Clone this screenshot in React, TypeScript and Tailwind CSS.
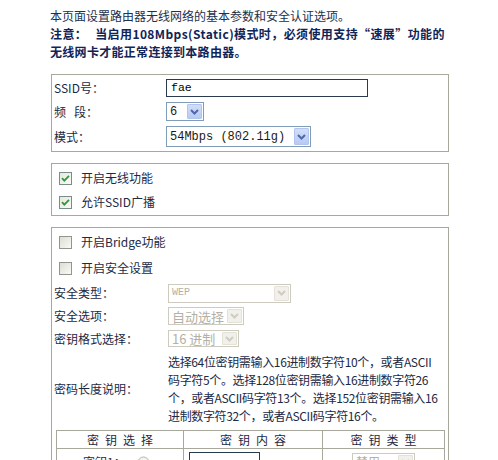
const cjk = "font-['Noto_Sans_CJK_SC',sans-serif]";
const mono = "font-['Liberation_Mono','Noto_Sans_CJK_SC',monospace]";

function Chevron({ disabled }: { disabled?: boolean }) {
  return (
    <svg width="9" height="6" viewBox="0 0 9 6">
      <path
        d="M1 1 L4.5 4.5 L8 1"
        fill="none"
        stroke={disabled ? "#cfcdc2" : "#4d6aa8"}
        strokeWidth="2"
      />
    </svg>
  );
}

function Select({
  className,
  value,
  disabled,
  textClass,
}: {
  className: string;
  value: string;
  disabled?: boolean;
  textClass: string;
}) {
  return (
    <div
      className={`flex items-stretch bg-white border ${
        disabled ? "border-[#cdcbc0]" : "border-[#7f9db9]"
      } ${className}`}
    >
      <span
        className={`flex-1 flex items-center pl-[3px] whitespace-nowrap leading-none ${textClass} ${
          disabled ? "text-[#b4b1a4]" : "text-[#1a1a1a]"
        }`}
      >
        {value}
      </span>
      <span
        className={`w-[15px] my-[1px] mr-[1px] flex items-center justify-center rounded-[1px] border ${
          disabled
            ? "bg-[#f1f0ea] border-[#e4e2d8]"
            : "bg-gradient-to-b from-[#d2ddf8] to-[#b8caf3] border-[#b3c4ee]"
        }`}
      >
        <Chevron disabled={disabled} />
      </span>
    </div>
  );
}

function Checkbox({ checked }: { checked?: boolean }) {
  return (
    <svg width="13" height="13" viewBox="0 0 13 13" className="shrink-0">
      <defs>
        <linearGradient id={checked ? "cbOn" : "cbOff"} x1="0" y1="0" x2="1" y2="1">
          <stop offset="0" stopColor={checked ? "#e2e8df" : "#dcdcd2"} />
          <stop offset="1" stopColor="#fbfbf8" />
        </linearGradient>
      </defs>
      <rect
        x="0.5"
        y="0.5"
        width="12"
        height="12"
        fill={`url(#${checked ? "cbOn" : "cbOff"})`}
        stroke={checked ? "#7a8c86" : "#8f9690"}
      />
      {checked && (
        <path d="M3 6.2 L5.3 8.6 L10 3.8" fill="none" stroke="#2f9a35" strokeWidth="1.8" />
      )}
    </svg>
  );
}

function Radio() {
  return (
    <svg width="13" height="13" viewBox="0 0 13 13">
      <circle cx="6.5" cy="6.5" r="5.5" fill="#f4f4f0" stroke="#b5b4ac" />
    </svg>
  );
}

function CheckRow({ label, checked }: { label: string; checked?: boolean }) {
  return (
    <div className="h-[24px] flex items-center pl-[7px] gap-[9px]">
      <Checkbox checked={checked} />
      <span className="text-[12px] text-[#1c2a44] leading-none">{label}</span>
    </div>
  );
}

const keyHead = ["密钥选择", "密钥内容", "密钥类型"];

export default function App() {
  return (
    <div className={`min-h-screen w-[498px] bg-white pb-10 ${cjk}`}>
      <div className="pl-[50px] pt-[7px] text-[12px] leading-[18px] whitespace-nowrap">
        <p className="text-[#22304c]">本页面设置路由器无线网络的基本参数和安全认证选项。</p>
        <p className="font-bold text-[#102458] tracking-[0.4px]">
          注意：<span className="inline-block w-[8px]" />当启用108Mbps(Static)模式时，必须使用支持“速展”功能的
        </p>
        <p className="font-bold text-[#102458] tracking-[0.3px]">无线网卡才能正常连接到本路由器。</p>
      </div>

      <div className="ml-[51px] w-[398px] mt-[13px] border border-[#a9a89d] pt-[4px] pb-[4px] flex flex-col gap-[5px] text-[12px] text-[#1c2a44]">
        <div className="flex items-center h-[18px]">
          <span className="w-[114px] pl-[2px] leading-none">SSID号：</span>
          <div className={`w-[202px] h-[18px] border border-[#2a3b4f] flex items-center pl-[4px] text-[11.5px] leading-none text-black ${mono}`}>
            fae
          </div>
        </div>
        <div className="flex items-center h-[19px]">
          <span className="w-[114px] pl-[2px] leading-none">
            频<span className="inline-block w-[8px]" />段：
          </span>
          <Select className="w-[38px] h-[19px]" value="6" textClass={`text-[12px] ${mono}`} />
        </div>
        <div className="flex items-center h-[21px]">
          <span className="w-[114px] pl-[2px] leading-none">模式：</span>
          <Select className="w-[145px] h-[21px]" value="54Mbps (802.11g)" textClass={`text-[12px] ${mono}`} />
        </div>
      </div>

      <div className="ml-[51px] w-[398px] mt-[11px] border border-[#a9a89d] pt-[2px] pb-[1px]">
        <CheckRow label="开启无线功能" checked />
        <CheckRow label="允许SSID广播" checked />
      </div>

      <div className="ml-[51px] w-[398px] mt-[11px] border border-[#a9a89d] pt-[1px] pb-[6px] text-[12px] text-[#1c2a44]">
        <div className="h-[26px] flex items-center pl-[7px] gap-[9px]">
          <Checkbox />
          <span className="leading-none">开启Bridge功能</span>
        </div>
        <div className="h-[26px] flex items-center pl-[7px] gap-[9px]">
          <Checkbox />
          <span className="leading-none">开启安全设置</span>
        </div>
        <div className="h-[24px] flex items-center">
          <span className="w-[116px] pl-[2px] leading-none">安全类型：</span>
          <Select className="w-[123px] h-[19px]" value="WEP" disabled textClass={`text-[10px] ${mono}`} />
        </div>
        <div className="h-[22px] flex items-center">
          <span className="w-[116px] pl-[2px] leading-none">安全选项：</span>
          <Select className="w-[76px] h-[18px]" value="自动选择" disabled textClass="text-[13px]" />
        </div>
        <div className="h-[23px] flex items-center">
          <span className="w-[116px] pl-[2px] leading-none">密钥格式选择：</span>
          <Select className="w-[71px] h-[17px]" value="16 进制" disabled textClass="text-[13px]" />
        </div>
        <div className="flex items-center pt-[3px]">
          <span className="w-[116px] pl-[2px] leading-none">密码长度说明：</span>
          <div className="leading-[18px] whitespace-nowrap text-[12px] tracking-[-0.35px]">
            <p>选择64位密钥需输入16进制数字符10个，或者ASCII</p>
            <p>码字符5个。选择128位密钥需输入16进制数字符26</p>
            <p>个，或者ASCII码字符13个。选择152位密钥需输入16</p>
            <p>进制数字符32个，或者ASCII码字符16个。</p>
          </div>
        </div>

        <div className="ml-[4px] mt-[5px] w-[389px] border border-[#a9a89d]">
          <div className="grid grid-cols-[127px_139px_1fr] h-[18px] border-b border-[#a9a89d]">
            {keyHead.map((h, i) => (
              <div
                key={h}
                className={`flex items-center justify-center gap-[6px] leading-none ${
                  i < 2 ? "border-r border-[#a9a89d]" : ""
                }`}
              >
                {h.split("").map((c, j) => (
                  <span key={j}>{c}</span>
                ))}
              </div>
            ))}
          </div>
          {[1, 2, 3, 4].map((n) => (
            <div key={n} className="grid grid-cols-[127px_139px_1fr] h-[27px] border-b border-[#a9a89d] last:border-b-0">
              <div className="flex items-center pl-[26px] gap-[8px] border-r border-[#a9a89d]">
                <span className="w-[46px] leading-none">密钥{n}：</span>
                <Radio />
              </div>
              <div className="flex items-center pl-[5px] border-r border-[#a9a89d]">
                <div className="w-[71px] h-[20px] border border-[#2a3b4f]" />
              </div>
              <div className="flex items-center pl-[29px]">
                <Select className="w-[63px] h-[19px]" value="禁用" disabled textClass="text-[12px]" />
              </div>
            </div>
          ))}
        </div>
      </div>
    </div>
  );
}
